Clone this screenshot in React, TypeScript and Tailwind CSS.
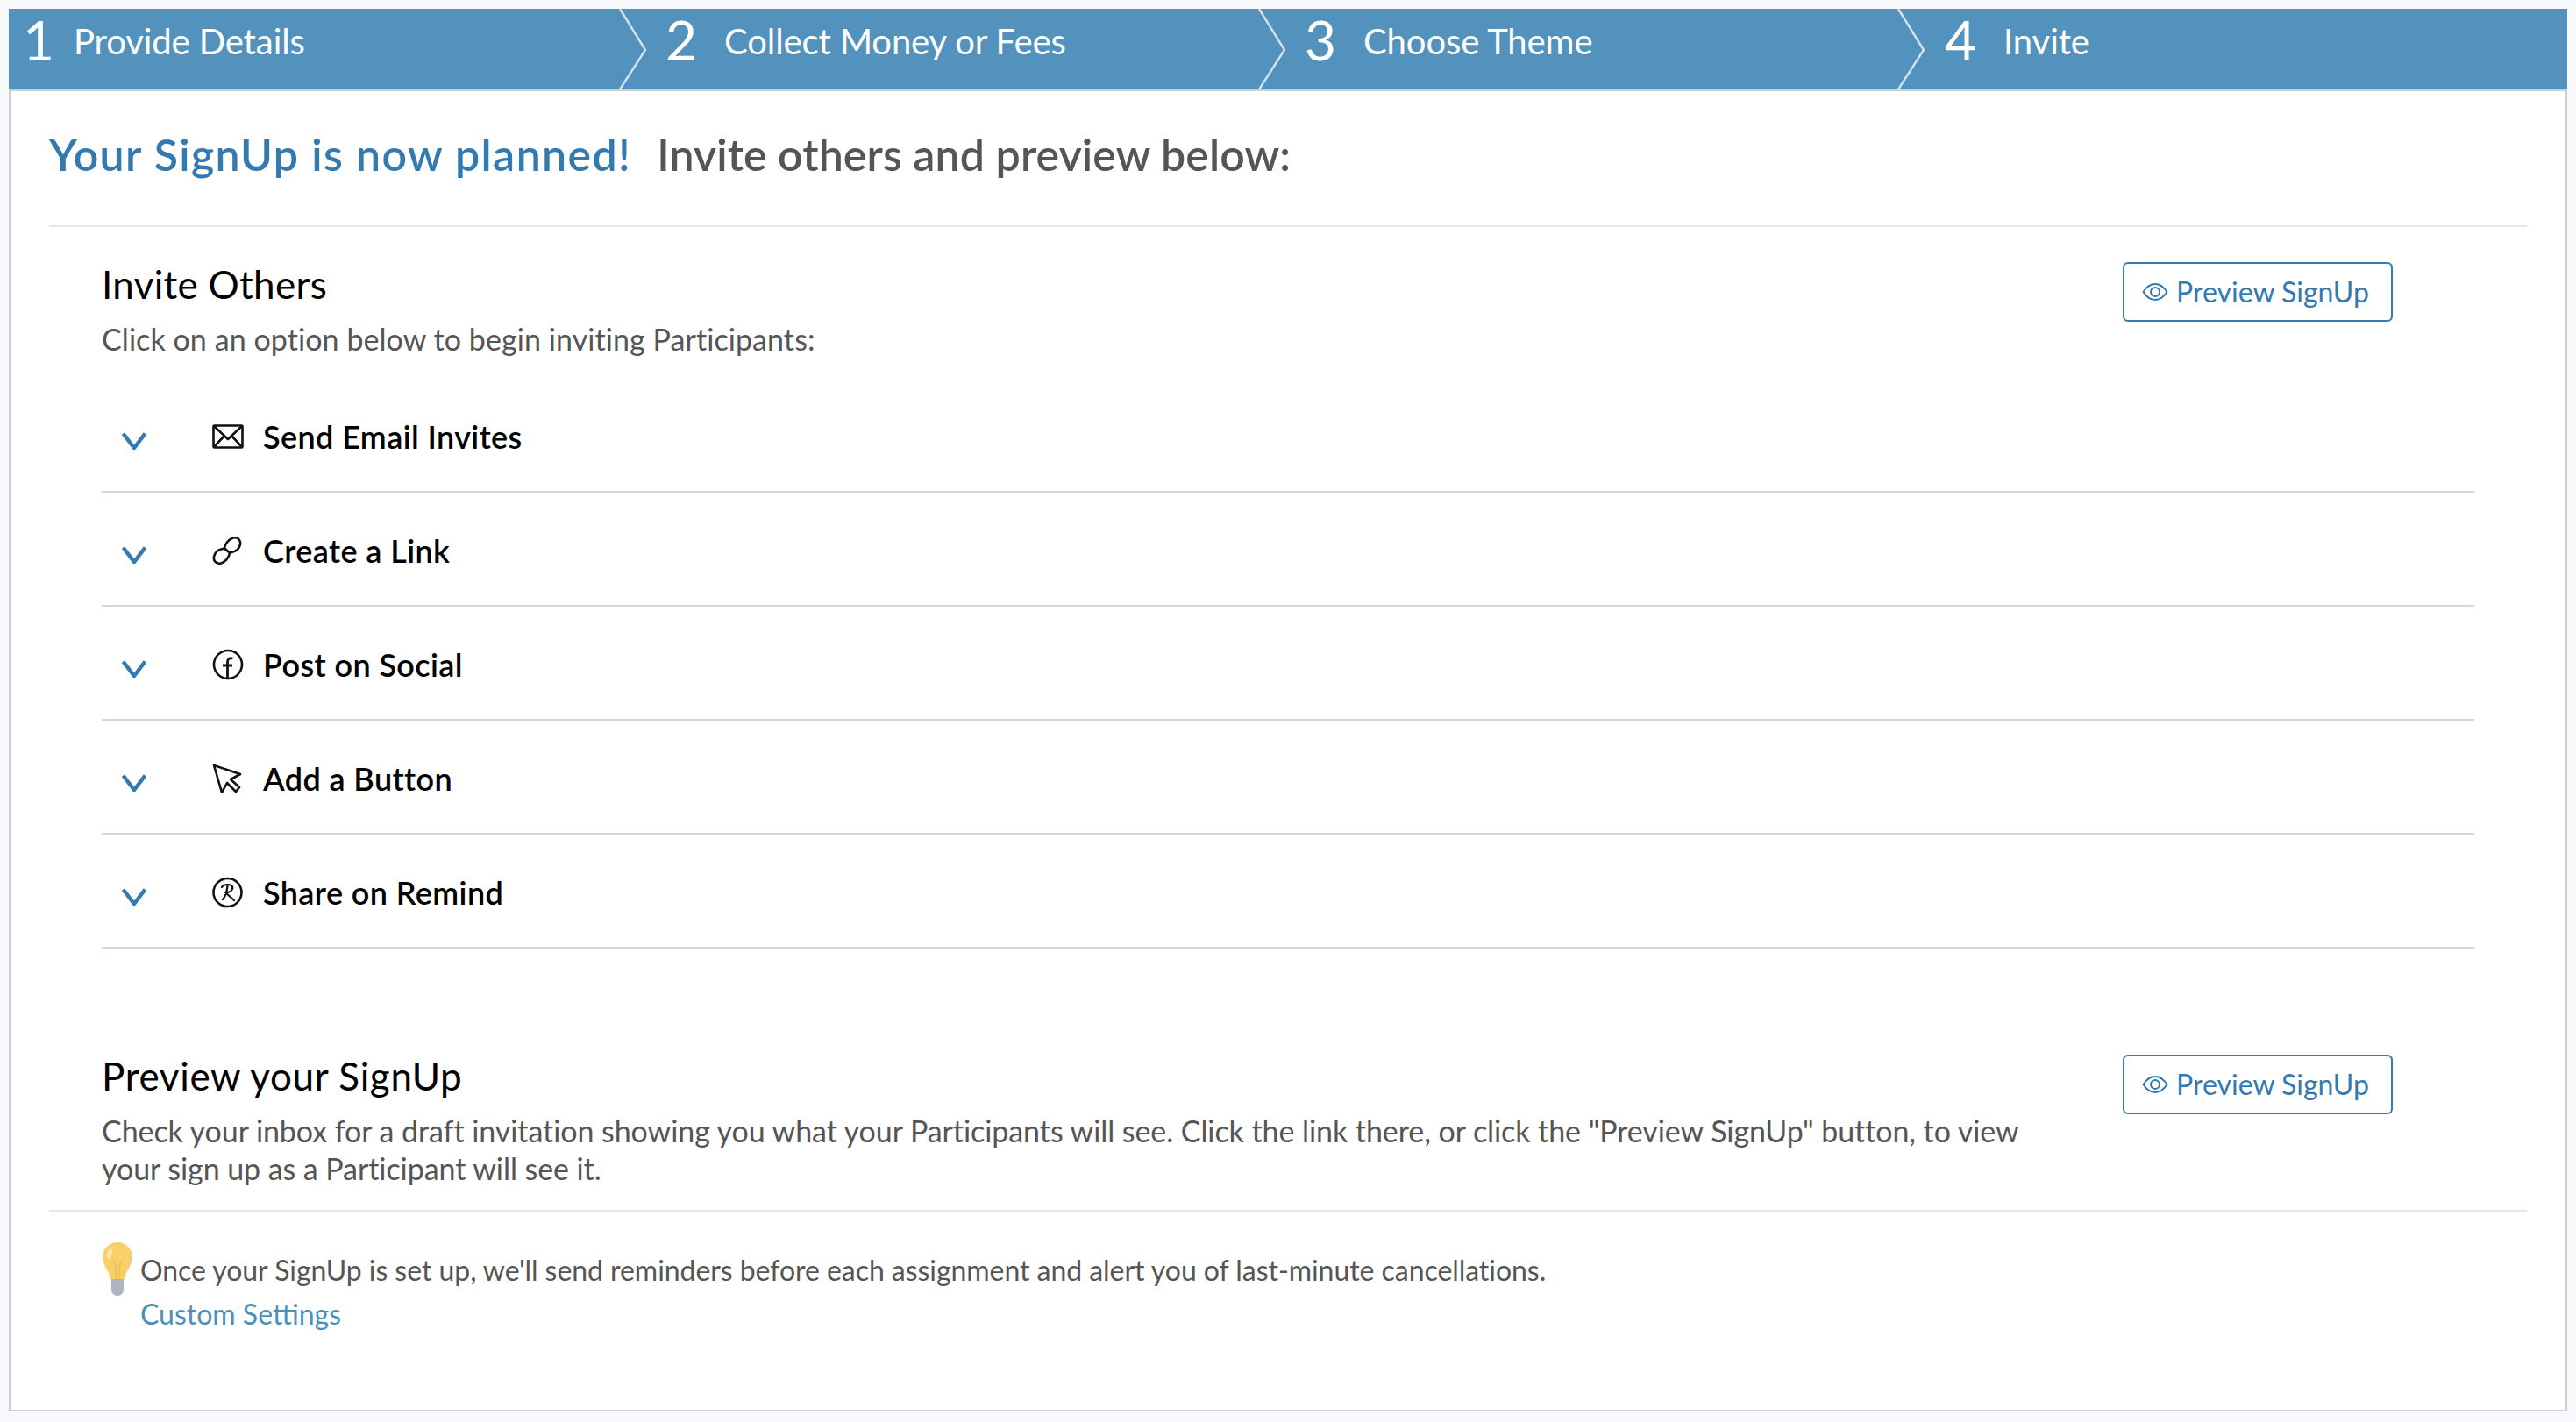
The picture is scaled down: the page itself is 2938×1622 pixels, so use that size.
const font = "font-['Lato','Liberation_Sans',sans-serif]";

function Chevron() {
  return (
    <svg className="absolute right-[-32px] top-0 z-10" width="34" height="92" viewBox="0 0 34 92" fill="none">
      <path d="M2 0 L31 47 L2 92" stroke="#d3e3ee" strokeWidth="2.4" />
    </svg>
  );
}

function Step({ n, label, w, pad, gap, last }: { n: string; label: string; w: string; pad: string; gap: string; last?: boolean }) {
  return (
    <div className={`relative flex h-[92px] items-start ${w} ${pad}`}>
      <span className="w-[36px] text-[62px] leading-[70px] font-normal text-white">{n}</span>
      <span className={`${gap} mt-[13px] text-[40px] leading-[48px] font-normal tracking-[-0.1px] text-white`}>{label}</span>
      {!last && <Chevron />}
    </div>
  );
}

function EyeIcon() {
  return (
    <svg width="30" height="22" viewBox="0 0 30 22" fill="none" stroke="#337ab0" strokeWidth="2">
      <path d="M1.5 11 C6 4 10 2 15 2 C20 2 24 4 28.5 11 C24 18 20 20 15 20 C10 20 6 18 1.5 11 Z" />
      <circle cx="15" cy="11" r="5" />
    </svg>
  );
}

function PreviewButton() {
  return (
    <button className="flex h-[68px] w-[308px] items-center rounded-[6px] border-2 border-[#337ab0] pl-[20px] text-[32px] text-[#337ab0]">
      <EyeIcon />
      <span className="ml-[9px]">Preview SignUp</span>
    </button>
  );
}

const stroke = { fill: "none", stroke: "#111", strokeWidth: 2.6, strokeLinejoin: "round" as const, strokeLinecap: "round" as const };

function Mail() {
  return (
    <svg width="36" height="28" viewBox="0 0 36 28" {...stroke} strokeLinecap="butt">
      <rect x="1.5" y="1.5" width="33" height="25" rx="1" />
      <path d="M2 2 L18 17 L34 2 M2 26 L14 13 M34 26 L22 13" />
    </svg>
  );
}
function LinkI() {
  return (
    <svg width="34" height="34" viewBox="0 0 34 34" {...stroke}>
      <path d="M14 14 C15 9 19 4 24 2.5 C29 1.5 33 5 32 10 C31 15 27 18 22 19 C19.5 19.5 18 18.5 17 17" />
      <path d="M20 20 C19 25 15 30 10 31.5 C5 32.5 1 29 2 24 C3 19 7 16 12 15 C14.5 14.5 16 15.5 17 17" />
    </svg>
  );
}
function Fb() {
  return (
    <svg width="36" height="36" viewBox="0 0 36 36" {...stroke}>
      <circle cx="18" cy="18" r="16" />
      <path d="M23.5 11 C20 10 17.5 11.5 17.5 15 V34 M12 19 H23" strokeWidth="2.8" strokeLinecap="butt" />
    </svg>
  );
}
function Cursor() {
  return (
    <svg width="34" height="34" viewBox="0 0 34 34" {...stroke}>
      <path d="M2 2 L32 12 L21 18 L31 27 L27 32 L17 22 L11 33 Z" />
    </svg>
  );
}
function Remind() {
  return (
    <svg width="35" height="36" viewBox="0 0 35 36" {...stroke}>
      <circle cx="17.5" cy="18" r="16" />
      <path d="M11 12 C12 9 15 9 18 9 C22 9 24 11 23 14 C22 17 18 18 15 18 L25 27 M17.5 10 C17 15 16 22 12 26" strokeWidth="2.2" />
    </svg>
  );
}

function Row({ icon, label }: { icon: React.ReactNode; label: string }) {
  return (
    <div className="flex h-[130px] items-start border-b-2 border-[#d6d6dc] pt-[44px]">
      <svg className="mt-[17px] ml-[23px]" width="28" height="20" viewBox="0 0 28 20" fill="none" stroke="#337ab0" strokeWidth="4.4">
        <path d="M1.5 1.5 L14 18 L26.5 1.5" />
      </svg>
      <span className="ml-[75px] mt-[4px] flex h-[36px] w-[58px] items-center">{icon}</span>
      <span className="text-[36px] leading-[44px] font-semibold tracking-[0.4px] text-black">{label}</span>
    </div>
  );
}

function Bulb() {
  return (
    <svg width="36" height="62" viewBox="0 0 36 62">
      <path d="M18 1 C8 1 1 9 1 18 C1 27 9 34 11 46 H25 C27 34 35 27 35 18 C35 9 28 1 18 1 Z" fill="#f8cf68" />
      <path d="M13 22 L16 28 V46 M23 22 L20 28 V46" stroke="#eebf56" strokeWidth="1.5" fill="none" />
      <ellipse cx="9" cy="14" rx="3" ry="6" fill="#fbe6ae" transform="rotate(15 9 14)" />
      <path d="M11 43 H25 V56 C24 60 21 62 18 62 C15 62 12 60 11 56 Z" fill="#aeb5c0" />
    </svg>
  );
}

export default function App() {
  return (
    <div className={`min-h-[1622px] bg-[#f8f9fd] p-[10px] ${font}`}>
      <div className="h-[1600px] w-[2918px]">
        <div className="flex h-[92px] bg-[#5292bd]">
          <Step n="1" label="Provide Details" w="w-[697px]" pad="pl-[16px]" gap="ml-[22px]" />
          <Step n="2" label="Collect Money or Fees" w="w-[729px]" pad="pl-[52px]" gap="ml-[31px]" />
          <Step n="3" label="Choose Theme" w="w-[729px]" pad="pl-[52px]" gap="ml-[31px]" />
          <Step n="4" label="Invite" w="w-[763px]" pad="pl-[53px]" gap="ml-[31px]" last />
        </div>
        <div className="h-[1508px] w-[2918px] border-2 border-[#cfcfd2] bg-white px-[44px]">
          <div className="flex h-[155px] items-start border-b-2 border-[#e6e7ea] pt-[42px] text-[50px] leading-[60px] font-semibold">
            <span className="tracking-[1.4px] text-[#337ab0]">Your SignUp is now planned!</span>
            <span className="ml-[29px] tracking-[0.1px] text-[#555]">Invite others and preview below:</span>
          </div>
          <div className="px-[60px]">
            <div className="flex items-start justify-between pr-[93px] pt-[38px]">
              <div>
                <h2 className="text-[44px] leading-[54px] font-normal tracking-[0.3px] text-black">Invite Others</h2>
                <p className="mt-[14px] text-[34px] leading-[43px] tracking-[0.07px] text-[#555]">Click on an option below to begin inviting Participants:</p>
              </div>
              <div className="mt-[2px]"><PreviewButton /></div>
            </div>
            <div className="mt-[24px]">
              <Row icon={<Mail />} label="Send Email Invites" />
              <Row icon={<LinkI />} label="Create a Link" />
              <Row icon={<Fb />} label="Post on Social" />
              <Row icon={<Cursor />} label="Add a Button" />
              <Row icon={<Remind />} label="Share on Remind" />
            </div>
            <div className="flex items-start justify-between pr-[93px] pt-[118px]">
              <div className="w-[2200px]">
                <h2 className="text-[44px] leading-[54px] font-normal tracking-[0.65px] text-black">Preview your SignUp</h2>
                <p className="mt-[14px] text-[34px] leading-[43px] tracking-[-0.07px] text-[#555]">
                  Check your inbox for a draft invitation showing you what your Participants will see. Click the link there, or click the "Preview SignUp" button, to view your sign up as a Participant will see it.
                </p>
              </div>
              <div className="mt-[3px]"><PreviewButton /></div>
            </div>
          </div>
          <div className="mt-[26px] flex items-start border-t-2 border-[#e6e7ea] pl-[60px] pt-[34px]">
            <Bulb />
            <div className="ml-[8px] pt-[8px] text-[32px] leading-[50px]">
              <p className="tracking-[-0.05px] text-[#555]">Once your SignUp is set up, we'll send reminders before each assignment and alert you of last-minute cancellations.</p>
              <a className="text-[#4a90bf]">Custom Settings</a>
            </div>
          </div>
        </div>
      </div>
    </div>
  );
}
